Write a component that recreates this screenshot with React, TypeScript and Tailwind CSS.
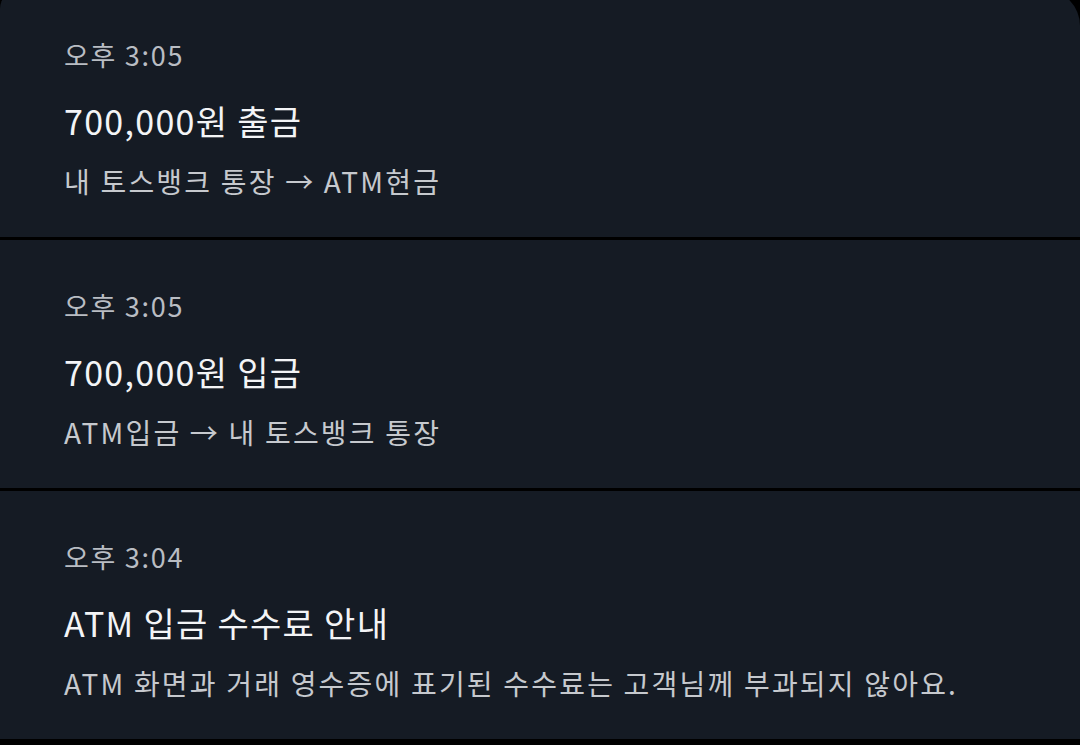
import React from 'react';

type Item = { time: string; title: string; desc: string };

const items: Item[] = [
  { time: '오후 3:05', title: '700,000원 출금', desc: '내 토스뱅크 통장 → ATM현금' },
  { time: '오후 3:05', title: '700,000원 입금', desc: 'ATM입금 → 내 토스뱅크 통장' },
  { time: '오후 3:04', title: 'ATM 입금 수수료 안내', desc: 'ATM 화면과 거래 영수증에 표기된 수수료는 고객님께 부과되지 않아요.' },
];

const App: React.FC = () => {
  return (
    <div
      className="w-[1080px] h-[745px] overflow-hidden bg-black flex flex-col gap-[3px]"
      style={{ fontFamily: '"Noto Sans CJK KR", "Noto Sans", sans-serif' }}
    >
      {items.map((item, i) => (
        <div
          key={i}
          className={`shrink-0 h-[248px] bg-[#151b24] px-16 pt-[48px] flex flex-col ${i === 0 ? 'mt-[-11px] rounded-tl-[20px] rounded-tr-[37px]' : ''}`}
        >
          <div className="text-[27px] leading-[36px] tracking-[1.7px] text-[#b9bdc3] whitespace-nowrap">{item.time}</div>
          <div className="mt-[26px] text-[34px] leading-[44px] tracking-[1.3px] text-[#f3f4f6] whitespace-nowrap">{item.title}</div>
          <div className="mt-[20px] text-[28px] leading-[36px] tracking-[2.2px] text-[#c6c9ce] whitespace-nowrap">{item.desc}</div>
        </div>
      ))}
    </div>
  );
};

export default App;
